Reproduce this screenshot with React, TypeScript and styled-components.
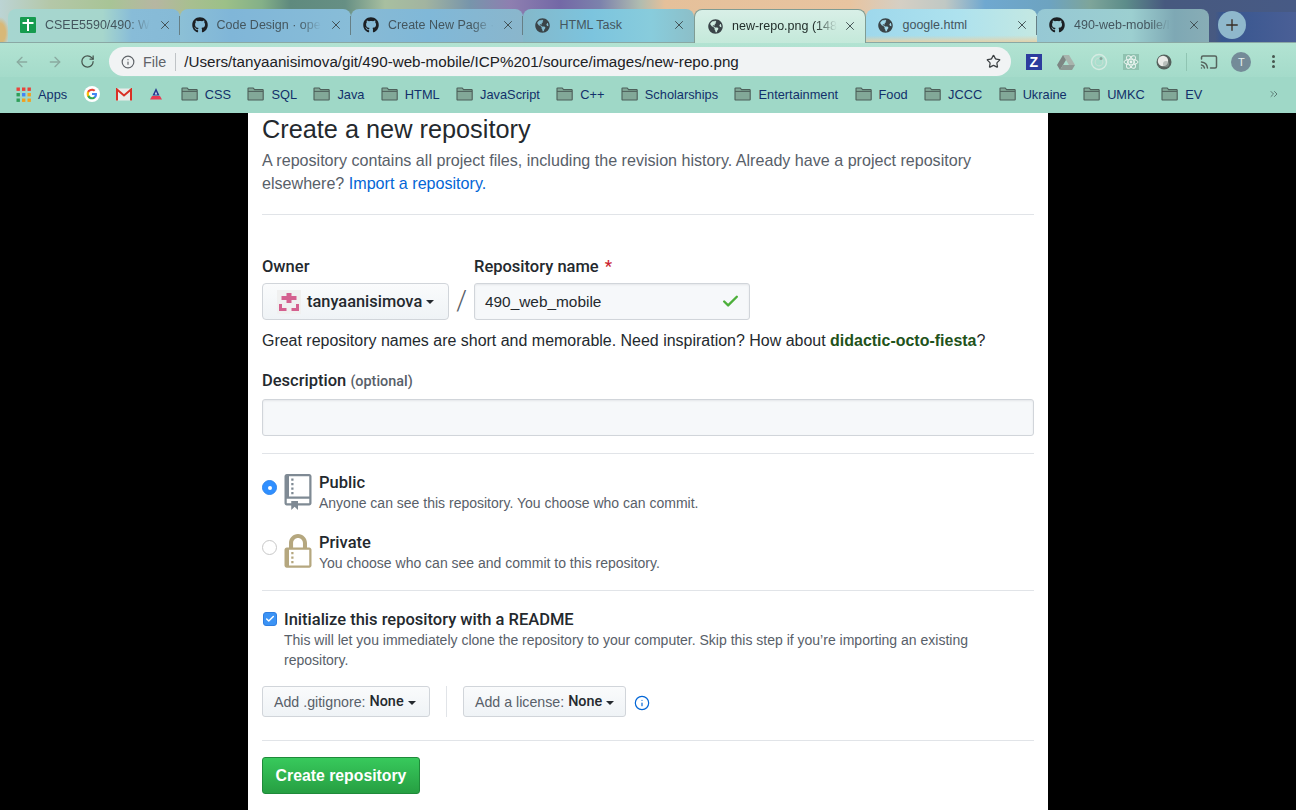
import React from "react";
import styled, { createGlobalStyle } from "styled-components";
import { ArrowLeft, ArrowRight, RotateCw, Info, Star, Cast, X, Plus, Check, ChevronsRight } from "lucide-react";
import { FaGithub, FaGlobeAmericas } from "react-icons/fa";

const Global = createGlobalStyle`
  html, body { margin: 0; padding: 0; height: 810px; overflow: hidden; background: #000; }
  * { box-sizing: border-box; }
  body { font-family: "Liberation Sans", Arial, sans-serif; }
`;

const Shell = styled.div`
  width: 1296px; height: 810px; display: flex; flex-direction: column; overflow: hidden;
`;

const TabStrip = styled.div`
  height: 43px; display: flex; align-items: flex-end; padding-left: 8px; border-bottom: 1px solid #8aa8a4;
  background:
    linear-gradient(to right, transparent 0, transparent 1215px, #37568f 1222px, #4a5f96 1296px) 0 12px / 100% 31px no-repeat,
    radial-gradient(ellipse 9px 16px at 0 33px, #d8b878 0%, #d8b878 60%, transparent 100%),
    linear-gradient(to right,
      #bcd4d4 0, #b4c7a8 50px, #a8c496 110px, #b6b6a2 155px, #a8bf90 190px, #9cc088 225px, #84b088 262px,
      #5f8a7e 290px, #668f84 345px, #a8bfa0 385px, #a2b4a0 425px, #7795ab 470px, #8e7fb0 510px, #7368a6 560px, #7c82ac 600px,
      #b0bcb0 640px, #e5c09a 665px, #e8c4a0 850px, #d5cfc4 900px, #c0c8c4 945px, #6fa8d0 985px, #6da3c0 1050px, #7ea59a 1090px,
      #5d8d8a 1125px, #47597f 1165px, #475a85 1296px);
`;

const TabBox = styled.div<{ $active?: boolean; $sep?: boolean; $bg?: string }>`
  width: 171.5px; height: 33px; flex: none; display: flex; align-items: center; padding: 0 8px 1px 12px;
  position: relative; border-radius: 8px 8px 0 0; font-size: 12.5px;
  background: ${p => p.$bg};
  color: ${p => p.$active ? "#222e2b" : "#44565e"};
  ${p => p.$active ? "border: 1px solid #7f9c94; border-bottom: none; margin-bottom: -1px; height: 34px; z-index: 1;" : ""}
  ${p => p.$sep ? `&::after { content: ""; position: absolute; right: 0; top: 7px; width: 1px; height: 19px; background: #667f86; }` : ""}
`;
const TabIcon = styled.span`
  width: 16px; height: 16px; flex: none; display: flex; align-items: center; justify-content: center; margin-right: 9px; color: #22292c;
`;
const TabTitle = styled.span`
  flex: 1; min-width: 0; white-space: nowrap;
`;
const Fade = styled.span<{ $fade?: boolean }>`
  display: inline-block;
  ${p => p.$fade ? `
  -webkit-mask-image: linear-gradient(to right, #000 80%, transparent 100%);
  mask-image: linear-gradient(to right, #000 80%, transparent 100%);` : ""}
`;
const Close = styled(X)`
  flex: none; margin-left: 4px; color: #3c4a4e;
`;
const NewTab = styled.div`
  width: 28px; height: 28px; margin: 0 0 3px 9px; border-radius: 50%; flex: none;
  background: #8fb8cc; color: #3a2f26; display: flex; align-items: center; justify-content: center;
`;

const Toolbar = styled.div`
  height: 34px; display: flex; align-items: center; padding: 3px 0 0 14px;
  background: linear-gradient(#b2e3d2, #a4dbca);
`;
const NavBtn = styled.div<{ $dim?: boolean }>`
  width: 16px; height: 16px; margin-right: 17px; color: ${p => p.$dim ? "#8aaaa0" : "#47564f"}; display: flex; flex: none;
`;
const Omnibox = styled.div`
  width: 902px; height: 29px; margin-left: -4px; flex: none; border-radius: 15px; background: #f1f3f4; display: flex; align-items: center;
  padding: 0 10px 0 12px; font-size: 15.2px; color: #202124;
`;
const FileLabel = styled.span`
  color: #5f6368; margin-left: 8px; padding-right: 9px; border-right: 1px solid #bfc3c6; line-height: 18px; font-size: 14.4px;
`;
const Url = styled.span`
  flex: 1; margin-left: 8px; white-space: nowrap;
`;
const ExtGroup = styled.div`
  display: flex; align-items: center; margin-left: 6.5px; flex: none;
`;
const ExtSlot = styled.div`
  width: 32.5px; height: 20px; display: flex; align-items: center; justify-content: center; flex: none;
`;
const ZIcon = styled.div`
  width: 16px; height: 16px; background: #2c3c9e; color: #fff; font: bold 14px/16px "Liberation Sans", sans-serif; text-align: center;
`;
const VSep = styled.div`
  width: 1px; height: 18px; background: #8fc4b2; margin: 0 6px 0 5.5px; flex: none;
`;
const Avatar = styled.div`
  width: 20px; height: 20px; border-radius: 50%; background: #748b98; color: #e6f0ee; font-size: 11px; display: flex; align-items: center; justify-content: center;
`;
const Kebab = styled.div`
  width: 3px; height: 13px; display: flex; flex-direction: column; justify-content: space-between;
  & > i { width: 3px; height: 3px; border-radius: 50%; background: #47564f; display: block; }
`;

const Bookmarks = styled.div`
  height: 36px; background: #9fd8c7; display: flex; align-items: center; padding: 0 0 2px 15px; font-size: 12.8px; color: #12306a;
`;
const Mark = styled.div`
  display: flex; align-items: center; gap: 7px; margin-right: 16.4px; white-space: nowrap; flex: none;
`;
const Glyph = styled.span<{ $w: number }>`
  width: ${p => p.$w}px; height: 16px; flex: none; display: flex; align-items: center; justify-content: center;
`;
const More = styled.div`
  margin-left: auto; margin-right: 16px; color: #5a7a73; display: flex;
`;

const Main = styled.main`
  flex: 1; background: #000; min-height: 0; overflow: hidden;
`;
const Sheet = styled.div`
  width: 800px; height: 100%; margin-left: 248px; background: #fff; padding: 0 14px; color: #24292e;
  font-size: 16px; overflow: hidden;
`;
const Title = styled.h1`
  margin: 0; font-size: 25.3px; font-weight: 400; line-height: 32px; color: #24292e;
`;
const Lead = styled.p`
  margin: 4px 0 0; line-height: 23px; color: #586069; font-size: 16.1px;
`;
const Link = styled.a`
  color: #0366d6;
`;
const Rule = styled.hr<{ $top: number }>`
  border: 0; border-top: 1px solid #e1e4e8; margin: ${p => p.$top}px 0 0;
`;
const Label = styled.div`
  font-family: Roboto, sans-serif; font-weight: 500; font-size: 16.5px; line-height: 20px; color: #24292e;
`;
const Required = styled.span`
  color: #cb2431; margin-left: 2px;
`;
const Optional = styled.span`
  font-size: 14.4px; color: #586069; font-weight: 500;
`;
const OwnerRow = styled.div`
  display: flex; margin-top: 42px;
`;
const OwnerCol = styled.div`
  width: 187px; flex: none;
`;
const Slash = styled.div`
  width: 25px; flex: none; font-size: 27px; line-height: 37px; margin-top: 26px; text-align: center; color: #586069; font-family: Roboto, sans-serif; font-weight: 300;
`;
const NameCol = styled.div`
  width: 276px; flex: none;
`;
const OwnerButton = styled.div`
  margin-top: 6px; height: 37px; border: 1px solid #d1d5da; border-radius: 4px; background: linear-gradient(#fafbfc, #eff3f6);
  display: flex; align-items: center; padding-left: 14px; font-size: 16.4px;
  font-family: Roboto, sans-serif; font-weight: 500; color: #24292e;
`;
const Identicon = styled.svg`
  width: 24px; height: 24px; margin-right: 6px; flex: none;
`;
const Caret = styled.span`
  display: inline-block; width: 0; height: 0; margin-left: 4px; border: 4.5px solid transparent; border-top-color: #24292e; border-bottom: 0; vertical-align: middle;
`;
const NameInput = styled.div`
  margin-top: 6px; height: 37px; border: 1px solid #d1d5da; border-radius: 3px; background: #f6f8fa; display: flex; align-items: center; justify-content: space-between;
  padding: 0 9px 0 10px; font-size: 15.4px; color: #24292e; box-shadow: inset 0 1px 2px rgba(27,31,35,.075);
`;
const Hint = styled.div`
  margin-top: 10px; line-height: 22px; color: #24292e; font-size: 15.97px;
`;
const Suggest = styled.strong`
  color: #22521a; font-weight: 700;
`;
const DescLabel = styled(Label)`
  margin-top: 19px;
`;
const DescInput = styled.div`
  margin-top: 7px; height: 37px; border: 1px solid #d1d5da; border-radius: 3px; background: #f6f8fa; box-shadow: inset 0 1px 2px rgba(27,31,35,.075);
`;
const VisRow = styled.div<{ $top: number }>`
  display: flex; align-items: flex-start; margin-top: ${p => p.$top}px; height: 40px;
`;
const Radio = styled.div<{ $on?: boolean }>`
  width: 15px; height: 15px; border-radius: 50%; margin: 6px 7px 0 0; flex: none;
  display: flex; align-items: center; justify-content: center;
  background: ${p => p.$on ? "#2f8fff" : "#fff"}; border: 1px solid ${p => p.$on ? "#2f86ee" : "#c8c8c8"};
  &::after { content: ""; width: 4px; height: 4px; border-radius: 50%; background: ${p => p.$on ? "#fff" : "transparent"}; }
`;
const VisIcon = styled.svg`
  width: 28px; height: 36px; flex: none; margin-right: 7px;
`;
const VisText = styled.div`
  display: flex; flex-direction: column;
`;
const VisTitle = styled.div`
  font-family: Roboto, sans-serif; font-weight: 500; font-size: 16.5px; line-height: 17px; color: #24292e; white-space: nowrap;
`;
const VisDesc = styled.div`
  font-size: 14px; line-height: 20px; margin-top: 2px; color: #586069;
`;
const InitRow = styled.div`
  display: flex; align-items: center; margin-top: 19px; height: 18px;
`;
const Tick = styled.div`
  width: 14px; height: 14px; margin: 0 7px 0 1px; flex: none; border-radius: 3px; background: #3b93f5; border: 1px solid #2f7ee0; color: #fff; display: flex; align-items: center; justify-content: center;
`;
const InitText = styled.div`
  margin: 2px 0 0 22px; font-size: 14px; line-height: 20px; color: #586069; width: 710px;
`;
const SelectRow = styled.div`
  display: flex; align-items: center; margin-top: 16px;
`;
const SmallSelect = styled.div<{ $w: number }>`
  width: ${p => p.$w}px; height: 31px; flex: none; border: 1px solid #d1d5da; border-radius: 3px; background: linear-gradient(#fafbfc, #eff3f6);
  display: flex; align-items: center; padding: 2px 0 0 11px; font-size: 14.2px; color: #586069; white-space: nowrap; line-height: 1;
`;
const SelectValue = styled.strong`
  color: #24292e; margin-left: 4px; font-family: Roboto, sans-serif; font-weight: 500; font-size: 14.4px;
`;
const SelectSep = styled.div`
  width: 1px; height: 31px; background: #e1e4e8; margin: 0 16px; flex: none;
`;
const InfoDot = styled.div`
  margin: 2px 0 0 8px; color: #0366d6; display: flex;
`;
const Submit = styled.div`
  margin-top: 16px; width: 158px; height: 37px; border-radius: 3px; border: 1px solid #1f8a3a;
  background: linear-gradient(#38c95c, #269f42);
  color: #fff; font-weight: 700; font-size: 15.8px; display: flex; align-items: center; justify-content: center;
`;

const Folder = () => (
  <svg width="17" height="14" viewBox="0 0 17 14">
    <path d="M1 3V1.6C1 1.2 1.2 1 1.6 1h4.6l1.4 1.6h8c.4 0 .6.2.6.6v9.2c0 .4-.2.6-.6.6H1.6c-.4 0-.6-.2-.6-.6z" fill="#82a898" stroke="#4d5f5a" strokeWidth="1.1" />
    <path d="M1 4.4h15" stroke="#4d5f5a" strokeWidth="1" />
  </svg>
);
const GitHub = () => <FaGithub size={16} color="#1b1f23" />;
const Globe = () => <FaGlobeAmericas size={15} color="#3a4448" />;
const Sheets = () => (
  <svg width="16" height="16" viewBox="0 0 16 16"><rect width="16" height="16" rx="1" fill="#169b4f" /><path d="M7 2h2v3h4.500v2H9v7H7V7H2.500V5H7z" fill="#fff" /></svg>
);
const AppsGrid = () => (
  <svg width="15" height="15" viewBox="0 0 15 15">
    {["#e8433a", "#e8433a", "#e8433a", "#2f9e58", "#4285f4", "#f2a01e", "#2f9e58", "#f2a01e", "#f2a01e"].map((c, i) => (
      <rect key={i} x={(i % 3) * 5.5 + .5} y={Math.floor(i / 3) * 5.5 + .5} width="3.4" height="3.4" fill={c} />
    ))}
  </svg>
);
const GoogleG = () => (
  <svg width="18" height="18" viewBox="0 0 18 18">
    <circle cx="9" cy="9" r="9" fill="#fff" />
    <path d="M14.600 9.200c0-.4 0-.8-.1-1.200H9v2.200h3.100c-.1.8-.6 1.400-1.200 1.800v1.500h2c1.100-1 1.700-2.500 1.700-4.300z" fill="#4285f4" />
    <path d="M9 15c1.600 0 3-.5 3.900-1.500l-2-1.500c-.5.4-1.200.6-1.900.6-1.500 0-2.800-1-3.200-2.400H3.700v1.500C4.700 13.700 6.700 15 9 15z" fill="#34a853" />
    <path d="M5.800 10.700c-.2-.5-.3-1.100-.3-1.700s.1-1.200.3-1.700V5.800H3.700C3.300 6.600 3 7.800 3 9s.3 2.400.7 3.200z" fill="#fbbc05" />
    <path d="M9 5.400c.8 0 1.600.3 2.200.9l1.700-1.700C11.900 3.600 10.600 3 9 3 6.700 3 4.700 4.300 3.700 5.800l2.100 1.500C6.200 6.300 7.500 5.400 9 5.400z" fill="#ea4335" />
  </svg>
);
const Gmail = () => (
  <svg width="16" height="13" viewBox="0 0 16 13">
    <rect x="0.5" y="0.5" width="15" height="12" fill="#e9ecea" />
    <path d="M1 12.500V1.500l7 6 7-6v11" fill="none" stroke="#d93025" strokeWidth="2" />
  </svg>
);
const Delta = () => (
  <svg width="14" height="13" viewBox="0 0 14 13">
    <path d="M7 0l3.500 7.500H3.500z" fill="#24388f" />
    <path d="M3 8h8l2 3.500H1z" fill="#e83a52" />
    <path d="M7 3.500l1.200 3H5.800z" fill="#dfe8f5" />
  </svg>
);
const Drive = () => (
  <svg width="18" height="16" viewBox="0 0 18 16">
    <path d="M6 1h6l6 10h-6z" fill="#a8b4ad" /><path d="M6 1L0 11l3 5 6-10z" fill="#7d8683" /><path d="M3 16h12l3-5H6z" fill="#8d9a95" />
  </svg>
);
const Orbit = () => (
  <svg width="18" height="20" viewBox="0 0 18 20" fill="none">
    <circle cx="9" cy="10" r="7.500" stroke="#d5ebe2" strokeWidth="1.400" /><circle cx="9" cy="10" r="3.800" stroke="#c3dfd3" strokeWidth="1.200" /><circle cx="11" cy="6.500" r="1.500" fill="#8aa59c" />
  </svg>
);
const ReactExt = () => (
  <svg width="16" height="16" viewBox="0 0 16 16" fill="none">
    <rect width="16" height="16" fill="#8fc2b0" />
    <g stroke="#eaf4f0" strokeWidth="1"><ellipse cx="8" cy="8" rx="7" ry="2.800" /><ellipse cx="8" cy="8" rx="7" ry="2.800" transform="rotate(60 8 8)" /><ellipse cx="8" cy="8" rx="7" ry="2.800" transform="rotate(120 8 8)" /></g>
    <circle cx="8" cy="8" r="1.400" fill="#eaf4f0" />
  </svg>
);
const Ball = () => (
  <svg width="16" height="16" viewBox="0 0 16 16"><circle cx="8" cy="8" r="7.500" fill="#55605c" /><circle cx="7" cy="7" r="5.200" fill="#e8e9e6" /><circle cx="10" cy="10" r="3" fill="#9aa39e" opacity=".6" /></svg>
);

const tabs = [
  { icon: <Sheets />, title: "CSEE5590/490: W", fade: true, sep: true, bg: "linear-gradient(to right, #a6d6d0 0, #a6d6cc 55%, #88bcd8 72%, #86bad6 100%)" },
  { icon: <GitHub />, title: "Code Design · ope", fade: true, sep: true, bg: "linear-gradient(to right, #8cc0d6 0, #80b6d8 30%, #88bdd8 100%)" },
  { icon: <GitHub />, title: "Create New Page ·", fade: true, sep: true, bg: "linear-gradient(to right, #88bad4 0, #80b8d8 45%, #8ab6cc 100%)" },
  { icon: <Globe />, title: "HTML Task", bg: "linear-gradient(to right, #84b8ca 0, #7cc4de 40%, #88ccdc 75%, #8cbfc8 100%)" },
  { icon: <Globe />, title: "new-repo.png (148", fade: true, active: true, bg: "linear-gradient(#d8efe7, #c4e9da)" },
  { icon: <Globe />, title: "google.html", sep: true, bg: "linear-gradient(to bottom, transparent 0, transparent 80%, #e2d2ac 100%), linear-gradient(to right, #9ed8ec 0, #aee2ee 55%, #c4e8e2 100%)" },
  { icon: <GitHub />, title: "490-web-mobile/I", fade: true, bg: "linear-gradient(to right, #96c8d4 0, #9ccfd0 55%, #7ea8b4 80%, #88adb6 100%)" },
];
const folders = ["CSS", "SQL", "Java", "HTML", "JavaScript", "C++", "Scholarships", "Entertainment", "Food", "JCCC", "Ukraine", "UMKC", "EV"];

export default function App() {
  return (
    <Shell>
      <Global />
      <TabStrip>
        {tabs.map(t => (
          <TabBox key={t.title} $active={t.active} $sep={t.sep} $bg={t.bg}>
            <TabIcon>{t.icon}</TabIcon>
            <TabTitle><Fade $fade={t.fade}>{t.title}</Fade></TabTitle>
            <Close size={14} strokeWidth={1.6} />
          </TabBox>
        ))}
        <NewTab><Plus size={18} strokeWidth={1.800} /></NewTab>
      </TabStrip>
      <Toolbar>
        <NavBtn $dim><ArrowLeft size={16} /></NavBtn>
        <NavBtn $dim><ArrowRight size={16} /></NavBtn>
        <NavBtn><RotateCw size={15} /></NavBtn>
        <Omnibox>
          <Info size={14} color="#5f6368" />
          <FileLabel>File</FileLabel>
          <Url>/Users/tanyaanisimova/git/490-web-mobile/ICP%201/source/images/new-repo.png</Url>
          <Star size={15} color="#3c4043" />
        </Omnibox>
        <ExtGroup>
          <ExtSlot><ZIcon>Z</ZIcon></ExtSlot>
          <ExtSlot><Drive /></ExtSlot>
          <ExtSlot><Orbit /></ExtSlot>
          <ExtSlot><ReactExt /></ExtSlot>
          <ExtSlot><Ball /></ExtSlot>
          <VSep />
          <ExtSlot><Cast size={18} color="#55635d" /></ExtSlot>
          <ExtSlot><Avatar>T</Avatar></ExtSlot>
          <ExtSlot><Kebab><i /><i /><i /></Kebab></ExtSlot>
        </ExtGroup>
      </Toolbar>
      <Bookmarks>
        <Mark><Glyph $w={16}><AppsGrid /></Glyph>Apps</Mark>
        <Mark><Glyph $w={16}><GoogleG /></Glyph></Mark>
        <Mark><Glyph $w={16}><Gmail /></Glyph></Mark>
        <Mark><Glyph $w={16}><Delta /></Glyph></Mark>
        {folders.map(f => <Mark key={f}><Glyph $w={17}><Folder /></Glyph>{f}</Mark>)}
        <More><ChevronsRight size={12} /></More>
      </Bookmarks>
      <Main>
        <Sheet>
          <Title>Create a new repository</Title>
          <Lead>A repository contains all project files, including the revision history. Already have a project repository elsewhere? <Link>Import a repository.</Link></Lead>
          <Rule $top={19} />
          <OwnerRow>
            <OwnerCol>
              <Label>Owner</Label>
              <OwnerButton>
                <Identicon viewBox="0 0 24 24">
                  <rect width="24" height="24" fill="#f0f0f0" />
                  <path d="M9.500 3h5v3h5v4h-5v3h-5v-3h-5V6h5zM2 14h3v4h4.500v3H2zM22 14h-3v4h-4.500v3H22z" fill="#d4608f" />
                </Identicon>
                tanyaanisimova<Caret />
              </OwnerButton>
            </OwnerCol>
            <Slash>/</Slash>
            <NameCol>
              <Label>Repository name <Required>*</Required></Label>
              <NameInput>490_web_mobile<Check size={19} strokeWidth={3} color="#4caf3a" /></NameInput>
            </NameCol>
          </OwnerRow>
          <Hint>Great repository names are short and memorable. Need inspiration? How about <Suggest>didactic-octo-fiesta</Suggest>?</Hint>
          <DescLabel>Description <Optional>(optional)</Optional></DescLabel>
          <DescInput />
          <Rule $top={17} />
          <VisRow $top={20}>
            <Radio $on />
            <VisIcon viewBox="0 0 12 16"><path fill="#7f8a94" d="M4 9H3V8h1v1zm0-3H3v1h1V6zm0-2H3v1h1V4zm0-2H3v1h1V2zm8-1v12c0 .55-.45 1-1 1H6v2l-1.500-1.500L3 16v-2H1c-.55 0-1-.45-1-1V1c0-.55.45-1 1-1h10c.55 0 1 .45 1 1zm-1 10H1v2h2v-1h3v1h5v-2zm0-10H2v9h9V1z" /></VisIcon>
            <VisText>
              <VisTitle>Public</VisTitle>
              <VisDesc>Anyone can see this repository. You choose who can commit.</VisDesc>
            </VisText>
          </VisRow>
          <VisRow $top={20}>
            <Radio />
            <VisIcon viewBox="0 0 12 16"><path fill="#b5a77f" d="M4 13H3v-1h1v1zm8-6v7c0 .55-.45 1-1 1H1c-.55 0-1-.45-1-1V7c0-.55.45-1 1-1h1V4c0-2.200 1.800-4 4-4s4 1.800 4 4v2h1c.55 0 1 .45 1 1zM3.800 6h4.410V4c0-1.220-.98-2.200-2.200-2.200-1.220 0-2.200.98-2.200 2.200v2H3.800zM11 7H2v7h9V7zM4 8H3v1h1V8zm0 2H3v1h1v-1z" /></VisIcon>
            <VisText>
              <VisTitle>Private</VisTitle>
              <VisDesc>You choose who can see and commit to this repository.</VisDesc>
            </VisText>
          </VisRow>
          <Rule $top={16} />
          <InitRow>
            <Tick><Check size={10} strokeWidth={3.500} /></Tick>
            <VisTitle>Initialize this repository with a README</VisTitle>
          </InitRow>
          <InitText>This will let you immediately clone the repository to your computer. Skip this step if you’re importing an existing repository.</InitText>
          <SelectRow>
            <SmallSelect $w={168}>Add .gitignore:<SelectValue>None</SelectValue><Caret /></SmallSelect>
            <SelectSep />
            <SmallSelect $w={163}>Add a license:<SelectValue>None</SelectValue><Caret /></SmallSelect>
            <InfoDot><Info size={16} strokeWidth={1.800} /></InfoDot>
          </SelectRow>
          <Rule $top={23} />
          <Submit>Create repository</Submit>
        </Sheet>
      </Main>
    </Shell>
  );
}
